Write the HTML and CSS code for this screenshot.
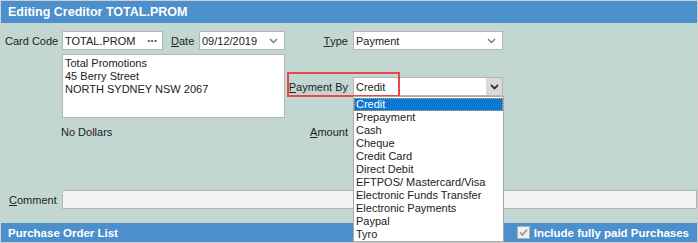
FILE: index.html
```html
<!DOCTYPE html>
<html lang="en">
<head>
    <meta charset="UTF-8">
    <meta name="viewport" content="width=device-width, initial-scale=1.0">
    <title>Editing Creditor</title>
    <link rel="stylesheet" href="styles.css">
</head>
<body>

<div class="window">
    <div class="title-bar">Editing Creditor TOTAL.PROM</div>

    <div class="form">
        <label class="lbl">Card Code</label>
        <div class="field card-code">
            <span>TOTAL.PROM</span>
            <span class="dots">&middot;&middot;&middot;</span>
        </div>
        <label class="lbl lbl-date"><u>D</u>ate</label>
        <div class="field date">
            <span>09/12/2019</span>
            <svg class="chev" width="9" height="6" viewBox="0 0 9 6"><path d="M1 1 L4.5 4.5 L8 1" fill="none" stroke="#777" stroke-width="1.4"/></svg>
        </div>
        <label class="lbl lbl-right"><u>T</u>ype</label>
        <div class="field select">
            <span>Payment</span>
            <svg class="chev" width="9" height="6" viewBox="0 0 9 6"><path d="M1 1 L4.5 4.5 L8 1" fill="none" stroke="#777" stroke-width="1.4"/></svg>
        </div>

        <div class="address">Total Promotions<br>45 Berry Street<br>NORTH SYDNEY NSW 2067</div>

        <label class="lbl lbl-right pay-label"><u>P</u>ayment By</label>
        <div class="field select pay">
            <span>Credit</span>
            <span class="drop-btn">
                <svg width="9" height="6" viewBox="0 0 9 6"><path d="M1 1 L4.5 4.5 L8 1" fill="none" stroke="#333" stroke-width="1.8"/></svg>
            </span>
        </div>

        <div class="no-dollars">No Dollars</div>
        <label class="lbl lbl-right amount"><u>A</u>mount</label>
    </div>

    <div class="comment-row">
        <label class="lbl comment-lbl"><u>C</u>omment</label>
        <div class="comment-input"></div>
    </div>

    <div class="list-bar">
        <span>Purchase Order List</span>
        <span class="include">
            <span class="checkbox">
                <svg width="11" height="11" viewBox="0 0 11 11"><path d="M2 5.5 L4.5 8 L9 2.5" fill="none" stroke="#9a9a9a" stroke-width="1.8"/></svg>
            </span>
            Include fully paid Purchases
        </span>
    </div>

    <!-- highlight around Payment By -->
    <div class="highlight-box"></div>

    <!-- open dropdown for Payment By -->
    <ul class="dropdown">
        <li class="selected">Credit</li>
        <li>Prepayment</li>
        <li>Cash</li>
        <li>Cheque</li>
        <li>Credit Card</li>
        <li>Direct Debit</li>
        <li>EFTPOS/ Mastercard/Visa</li>
        <li>Electronic Funds Transfer</li>
        <li>Electronic Payments</li>
        <li>Paypal</li>
        <li>Tyro</li>
    </ul>
</div>

</body>
</html>
```

FILE: styles.css
```css
body {
    margin: 0;
    font-family: "Liberation Sans", Arial, sans-serif;
    font-size: 11px;
    color: #222;
    background-color: #c2d7d1;
}
.window {
    position: relative;
    width: 698px;
    height: 243px;
    box-sizing: border-box;
    border: 1px solid #cfcfcf;
    background-color: #c2d7d1;
    overflow: hidden;
    display: flex;
    flex-direction: column;
}
.title-bar {
    height: 22px;
    line-height: 22px;
    padding-left: 7px;
    background-color: #4b8fcc;
    color: #fff;
    font-weight: bold;
    font-size: 12.5px;
}
.form {
    display: grid;
    grid-template-columns: 57px 101px 36px 86px 68px 150px;
    grid-template-rows: 19px 4px 23px 19px 22px 6px 16px;
    padding: 8px 0 0 4px;
}
.lbl {
    display: flex;
    align-items: center;
    white-space: nowrap;
}
.lbl-date {
    grid-column: 3;
    padding-left: 8px;
}
.lbl-right {
    justify-content: flex-end;
    padding-right: 5px;
}
.field {
    display: flex;
    align-items: center;
    justify-content: space-between;
    box-sizing: border-box;
    background-color: #fff;
    border: 1px solid #b5b5b5;
    padding: 0 1px 0 2px;
    white-space: nowrap;
}
.card-code .dots {
    font-size: 13px;
    font-weight: bold;
    color: #555;
    letter-spacing: -1px;
    padding-right: 4px;
}
.chev {
    margin-right: 5px;
}
.address {
    grid-column: 2 / 5;
    grid-row: 3 / 6;
    box-sizing: border-box;
    background-color: #fff;
    border: 1px solid #b5b5b5;
    padding: 2px 2px;
    line-height: 13px;
}
.pay-label {
    grid-column: 5;
    grid-row: 4;
}
.pay {
    grid-column: 6;
    grid-row: 4;
    padding-right: 0;
}
.drop-btn {
    display: flex;
    align-items: center;
    justify-content: center;
    width: 16px;
    height: 17px;
    background-color: #d9d9d9;
}
.no-dollars {
    grid-column: 2;
    grid-row: 7;
    display: flex;
    align-items: center;
    margin-left: -1px;
}
.amount {
    grid-column: 5;
    grid-row: 7;
}
.comment-row {
    display: flex;
    height: 19px;
    margin-top: 50px;
    padding-left: 8px;
}
.comment-lbl {
    width: 53px;
}
.comment-input {
    flex: 1;
    box-sizing: border-box;
    background-color: #f4f4f4;
    border: 1px solid #b5b5b5;
}
.list-bar {
    display: flex;
    align-items: center;
    justify-content: space-between;
    margin-top: 14px;
    flex: 1;
    padding: 0 8px 0 7px;
    background-color: #4b8fcc;
    color: #fff;
    font-weight: bold;
    font-size: 11.5px;
}
.include {
    display: flex;
    align-items: center;
    gap: 4px;
}
.checkbox {
    display: flex;
    align-items: center;
    justify-content: center;
    width: 13px;
    height: 13px;
    box-sizing: border-box;
    background-color: #f0f0f0;
    border: 1px solid #b0b0b0;
}
.highlight-box {
    position: absolute;
    left: 286px;
    top: 71px;
    width: 113px;
    height: 25px;
    box-sizing: border-box;
    border: 2px solid #e8474c;
}
.dropdown {
    position: absolute;
    left: 352px;
    top: 95px;
    width: 151px;
    height: 146px;
    box-sizing: border-box;
    margin: 0;
    padding: 1px 0 0 0;
    list-style: none;
    background-color: #fff;
    border: 1px solid #a8a8a8;
}
.dropdown li {
    height: 13px;
    line-height: 13px;
    padding-left: 2px;
    white-space: nowrap;
}
.dropdown li.selected {
    background-color: #0a78d7;
    color: #fff;
    outline: 1px dotted #f2a23a;
    outline-offset: -1px;
}
```
